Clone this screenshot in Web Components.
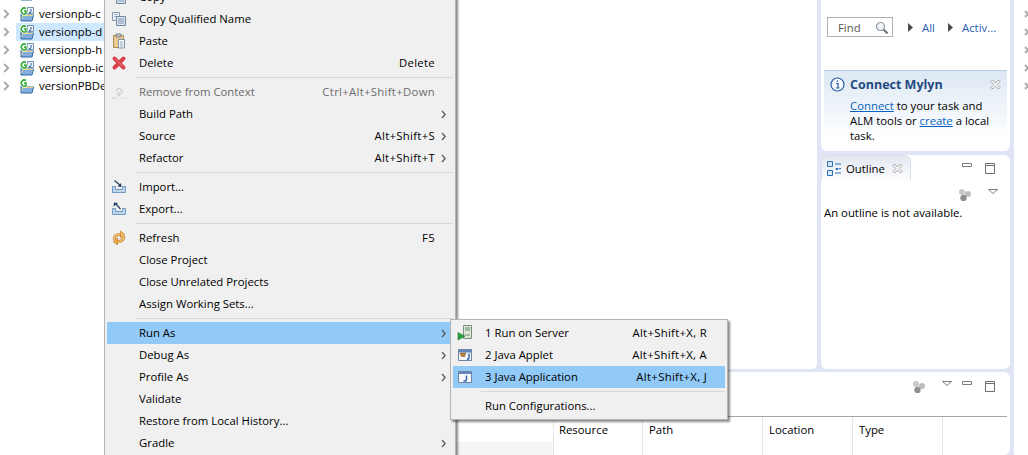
<!DOCTYPE html>
<html>
<head>
<meta charset="utf-8">
<title>Eclipse context menu</title>
<style>
  html, body { margin: 0; height: 100%; background: #fff; overflow: hidden; }
  body { font: 11.35px "Open Sans", "Liberation Sans", sans-serif; color: #000; }
</style>
</head>
<body>
<ide-shell>
  <project-tree slot="tree">
    <tree-row label="versionpb" style="margin-bottom:3px"></tree-row>
    <tree-row label="versionpb-c"></tree-row>
    <tree-row label="versionpb-d" selected></tree-row>
    <tree-row label="versionpb-h"></tree-row>
    <tree-row label="versionpb-ic"></tree-row>
    <tree-row label="versionPBDe" plain></tree-row>
  </project-tree>
  <task-panel slot="tasks"></task-panel>
  <outline-panel slot="outline"></outline-panel>
  <problems-panel slot="bottom"></problems-panel>
</ide-shell>

<ctx-menu style="left:104px;top:-17px;width:352px">
  <menu-item icon="copyq">Copy</menu-item>
  <menu-item icon="copyq">Copy Qualified Name</menu-item>
  <menu-item icon="paste">Paste</menu-item>
  <menu-item icon="del" keys="Delete">Delete</menu-item>
  <menu-sep></menu-sep>
  <menu-item icon="remove" keys="Ctrl+Alt+Shift+Down" disabled>Remove from Context</menu-item>
  <menu-item more>Build Path</menu-item>
  <menu-item keys="Alt+Shift+S" more>Source</menu-item>
  <menu-item keys="Alt+Shift+T" more>Refactor</menu-item>
  <menu-sep></menu-sep>
  <menu-item icon="import">Import...</menu-item>
  <menu-item icon="export">Export...</menu-item>
  <menu-sep></menu-sep>
  <menu-item icon="refresh" keys="F5">Refresh</menu-item>
  <menu-item>Close Project</menu-item>
  <menu-item>Close Unrelated Projects</menu-item>
  <menu-item>Assign Working Sets...</menu-item>
  <menu-sep></menu-sep>
  <menu-item more active>Run As</menu-item>
  <menu-item more>Debug As</menu-item>
  <menu-item more>Profile As</menu-item>
  <menu-item>Validate</menu-item>
  <menu-item>Restore from Local History...</menu-item>
  <menu-item more>Gradle</menu-item>
</ctx-menu>

<ctx-menu style="left:450px;top:319px;width:278px">
  <menu-item icon="server" keys="Alt+Shift+X, R">1 Run on Server</menu-item>
  <menu-item icon="applet" keys="Alt+Shift+X, A">2 Java Applet</menu-item>
  <menu-item icon="japp" keys="Alt+Shift+X, J" active>3 Java Application</menu-item>
  <menu-sep></menu-sep>
  <menu-item>Run Configurations...</menu-item>
</ctx-menu>

<script>
'use strict';

const ARROWS = 'M3 9.500C3 6 6 4 10 4.500M13 6.500C13 10 10 12 6 11.500';

const ICONS = {
  copyq: '<path d="M1.500 1.500h7v8h-7z" fill="#eef2f7" stroke="#8598ad"/><path d="M3 3.500h4M3 5.500h3" stroke="#9fb2c6"/><path d="M5.500 5.500h9v9h-9z" fill="#dbe5f0" stroke="#71889f"/><path d="M7 8h6M7 10h6M7 12h6" stroke="#7f9ab5"/>',
  paste: '<path d="M2.500 2.500h10v12h-10z" fill="#ecca92" stroke="#b28c55"/><path d="M5 1h5v3H5z" fill="#b8bcc2" stroke="#85888d"/><path d="M7.500 6.500h6v8.500h-6z" fill="#fbfcfe" stroke="#7f93a8"/><path d="M9 9h3M9 11h3M9 13h3" stroke="#92a6ba"/>',
  del: '<path d="M3.500 3.500l9 9M12.500 3.500l-9 9" stroke="#d8434c" stroke-width="4" stroke-linecap="round"/><path d="M4 3.500l8.500 8.500" stroke="#ef7f84" stroke-width="1"/>',
  remove: '<path d="M5 7.500a3 3 0 1 1 3 3M8 8l-1.500 2.500L9 12" fill="none" stroke="#c6c6c6"/><path d="M1 14h4M7 14h1M10 14h1M13 14h2" stroke="#cfcfcf"/>',
  import: '<path d="M1.500 7.500l3 0v3h7v-3h3v6h-13z" fill="#c0d5ea" stroke="#7199c4"/><path d="M3.500 1.500l6 5" stroke="#26405f" stroke-width="1.200"/><path d="M6.500 7.500l4 .5-.5-4z" fill="#26405f"/>',
  export: '<path d="M1.500 7.500l3 0v3h7v-3h3v6h-13z" fill="#c0d5ea" stroke="#7199c4"/><path d="M9.500 8l-5-5.500" stroke="#26405f" stroke-width="1.200"/><path d="M2.500 5.500l.5-4 4 .5z" fill="#26405f"/>',
  refresh: `<path d="${ARROWS}" fill="none" stroke="#c48636" stroke-width="3"/><path d="${ARROWS}" fill="none" stroke="#f4bd63" stroke-width="1.600"/><path d="M9.500 1 14 4.500 9.500 8z" fill="#f4bd63" stroke="#c48636" stroke-width=".8"/><path d="M6.500 8 2 11.500 6.500 15z" fill="#eeac48" stroke="#c48636" stroke-width=".8"/>`,
  server: '<path d="M6.500 .5h8v13h-8z" fill="#dfe7d6" stroke="#7d8c80"/><path d="M8 3h5M8 5h5" stroke="#5c8f6d"/><path d="M8 9h5v2H8z" fill="#a9b8aa"/><path d="M1 7.500v7.500L8 11.200z" fill="#2fa044" stroke="#1d7a31" stroke-width=".6"/>',
  applet: '<path d="M1.500 2.500h13v11h-13z" fill="#f3f6fa" stroke="#6f84a0"/><path d="M2 3h12v2.500H2z" fill="#5e88bd"/><path d="M3 6l1.500 3.500h3L9 6z" fill="#b9823c" stroke="#8c5f28" stroke-width=".6"/><path d="M12 6.500v4.200q0 1.500-1.500 1.500H10" fill="none" stroke="#2d5fa8" stroke-width="1.400"/>',
  japp: '<path d="M1.500 2.500h13v11h-13z" fill="#f6f8fb" stroke="#6f84a0"/><path d="M2 3h12v2H2z" fill="#5e88bd"/><path d="M9.500 6.500v4q0 1.500-1.500 1.500H6.500" fill="none" stroke="#2d5fa8" stroke-width="1.400"/>',
  info: '<circle cx="7.500" cy="7.500" r="6.500" fill="#f4f8fd" stroke="#2d5da6" stroke-width="1.200"/><path d="M7.500 3.500v1.500M6 6.500h2v4.500M6 11h3.500" fill="none" stroke="#2d5da6" stroke-width="1.200"/>',
  close: '<path d="M1 2.500 2.500 1 5.500 4 8.500 1 10 2.500 7 5.500 10 8.500 8.500 10 5.500 7 2.500 10 1 8.500 4 5.500z" fill="#fff" stroke="#8b8b8b" stroke-width=".8"/>',
  outline: '<path d="M.5 .5h5v5h-5z" fill="#d7e6f6" stroke="#2f6fb5"/><path d="M.5 9.500h5v5h-5z" fill="#d7e6f6" stroke="#2f6fb5"/><path d="M8 3h6M9 7.500h2v1H9zM12 7.500h2M8 12h6" stroke="#2f6fb5" fill="none"/>',
  find: '<circle cx="5.500" cy="5.500" r="4" fill="#f3f6f9" stroke="#8f9aa5" stroke-width="1.200"/><path d="M8.500 8.500l4 4" stroke="#6d6d6d" stroke-width="2"/>',
  group: '<circle cx="4" cy="4" r="3" fill="#c8c8c8"/><circle cx="10" cy="6" r="3" fill="#bdbdbd"/><circle cx="5.500" cy="10" r="3.200" fill="#8f8f8f"/>',
  tri: '<path d="M.5 .5h9L5 4.500z" fill="#fff" stroke="#7c7c7c"/>',
  min: '<path d="M.5 .5h9v3h-9z" fill="#fff" stroke="#7c7c7c"/>',
  max: '<path d="M.5 .5h9v10h-9z" fill="#fff" stroke="#6e6e6e"/><path d="M.5 2.500h9" stroke="#6e6e6e"/>',
  play: '<path d="M0 0l5 4.500L0 9z" fill="#4b4b4b"/>',
  chev: '<path d="M1 1l3.200 3.500L1 8" fill="none" stroke="#555" stroke-width="1.200"/>',
  treechev: '<path d="M1.200 1l4 4-4 4" fill="none" stroke="#a6a6a6" stroke-width="1.800"/>',
  edge: '<path d="M1 1l6 6M7 1L1 7" stroke="#a8a8a8" stroke-width="1.800"/>',
  project: '<path d="M2 7.500h4l1.500 1.500h7l-1.500 6H2z" fill="#83aede" stroke="#2e68a9"/><path d="M2.500 13l1.500-3.500h10" fill="none" stroke="#e8d27a"/><path d="M8.500 1.500h6v6h-6z" fill="#eef3f9" stroke="#6f8fb0"/><path d="M12 3v2.500q0 1-1 1h-1" fill="none" stroke="#2d5fa8"/><path d="M7 2.500A3 3 0 1 0 7 7.500V5H5" fill="none" stroke="#fff" stroke-width="3"/><path d="M7 2.500A3 3 0 1 0 7 7.500V5H5" fill="none" stroke="#2cab2f" stroke-width="1.500"/>',
  plainproject: '<path d="M2 7.500h5l1.500 1.500h6l-1.500 6H2z" fill="#83aede" stroke="#2e68a9"/><path d="M2.500 13l1.500-3.500h10" fill="none" stroke="#e8d27a"/><path d="M7 2.500A3 3 0 1 0 7 7.500V5H5" fill="none" stroke="#fff" stroke-width="3"/><path d="M7 2.500A3 3 0 1 0 7 7.500V5H5" fill="none" stroke="#2cab2f" stroke-width="1.500"/>'
};

const VIEWBOX = {
  close: [11, 11], tri: [10, 5], min: [10, 4], max: [10, 11], play: [5, 9], chev: [5, 9],
  treechev: [7, 10], edge: [8, 8], find: [13, 13], group: [13, 13], info: [15, 15], outline: [15, 15]
};

customElements.define('ide-icon', class extends HTMLElement {
  connectedCallback() {
    if (this.shadowRoot) return;
    const name = this.getAttribute('name');
    const [w, h] = VIEWBOX[name] || [16, 16];
    this.attachShadow({mode: 'open'}).innerHTML = `
      <style>:host { display: block; flex: none; width: ${w}px; height: ${h}px; } svg { display: block; }</style>
      <svg width="${w}" height="${h}" viewBox="0 0 ${w} ${h}">${ICONS[name]}</svg>`;
  }
});

const shellTemplate = document.createElement('template');
shellTemplate.innerHTML = `
  <style>
    :host { display: flex; width: 1028px; height: 455px; overflow: hidden; background: #fff; }
    .tree { flex: none; width: 200px; background: #fff; overflow: hidden; }
    .work {
      flex: none; width: 814px; display: grid; background: #dfe5f5;
      grid-template-columns: 617px 189px; grid-template-rows: 369px 1fr;
      column-gap: 4px; row-gap: 3px; padding-right: 4px; box-sizing: border-box;
    }
    .editor { background: #fff; border-bottom-right-radius: 5px; }
    .side { display: flex; flex-direction: column; gap: 4px; min-height: 0; }
    .bottom { grid-column: 1 / 3; min-height: 0; }
    .marks { flex: none; width: 14px; overflow: hidden; display: flex; flex-direction: column; padding-top: 10px; gap: 10px; }
    .marks ide-icon { margin-left: 10px; }
  </style>
  <div class="tree"><slot name="tree"></slot></div>
  <div class="work">
    <div class="editor"></div>
    <div class="side"><slot name="tasks"></slot><slot name="outline"></slot></div>
    <div class="bottom"><slot name="bottom"></slot></div>
  </div>
  <div class="marks">
    <ide-icon name="edge"></ide-icon><ide-icon name="edge"></ide-icon><ide-icon name="edge"></ide-icon>
    <ide-icon name="edge"></ide-icon><ide-icon name="edge"></ide-icon>
  </div>`;

customElements.define('ide-shell', class extends HTMLElement {
  constructor() {
    super();
    this.attachShadow({mode: 'open'}).appendChild(shellTemplate.content.cloneNode(true));
  }
});

customElements.define('project-tree', class extends HTMLElement {
  constructor() {
    super();
    this.attachShadow({mode: 'open'}).innerHTML = `
      <style>:host { display: flex; flex-direction: column; margin-top: -16px; }</style>
      <slot></slot>`;
  }
});

customElements.define('tree-row', class extends HTMLElement {
  connectedCallback() {
    if (this.shadowRoot) return;
    const icon = this.hasAttribute('plain') ? 'plainproject' : 'project';
    this.attachShadow({mode: 'open'}).innerHTML = `
      <style>
        :host { display: flex; align-items: center; height: 18px; white-space: nowrap; flex: none; }
        .chev { width: 16px; padding-left: 3px; box-sizing: border-box; }
        .row { display: flex; align-items: center; height: 18px; flex: 1; padding-left: 3px; gap: 4px; }
        .row span { padding-bottom: 2px; }
        :host([selected]) .row { background: #cde8ff; }
      </style>
      <div class="chev"><ide-icon name="treechev"></ide-icon></div>
      <div class="row"><ide-icon name="${icon}"></ide-icon><span>${this.getAttribute('label')}</span></div>`;
  }
});

customElements.define('ctx-menu', class extends HTMLElement {
  constructor() {
    super();
    this.attachShadow({mode: 'open'}).innerHTML = `
      <style>
        :host {
          display: flex; flex-direction: column; position: absolute; box-sizing: border-box;
          background: #f0f0f0; border: 1px solid #b4b4b4; padding: 2px;
          box-shadow: 2px 2px 2px rgba(0,0,0,.45);
        }
      </style>
      <slot></slot>`;
  }
});

customElements.define('menu-sep', class extends HTMLElement {
  constructor() {
    super();
    this.attachShadow({mode: 'open'}).innerHTML = `
      <style>
        :host { display: block; height: 7px; margin-left: 28px; box-sizing: border-box; padding-top: 3px; }
        div { height: 1px; background: #d7d7d7; }
      </style>
      <div></div>`;
  }
});

customElements.define('menu-item', class extends HTMLElement {
  connectedCallback() {
    if (this.shadowRoot) return;
    const icon = this.getAttribute('icon');
    const keys = this.getAttribute('keys');
    this.attachShadow({mode: 'open'}).innerHTML = `
      <style>
        :host { display: flex; align-items: center; height: 22px; white-space: nowrap; flex: none; }
        :host([active]) { background: #91c9f7; }
        :host([disabled]) { color: #6d6d6d; }
        .icon { flex: none; width: 32px; padding-left: 4px; box-sizing: border-box; }
        .label { flex: 1; padding-bottom: 2px; }
        .keys { padding-bottom: 2px; letter-spacing: .3px; }
        .more { flex: none; width: 18px; padding-left: 6px; box-sizing: border-box; }
      </style>
      <div class="icon">${icon ? `<ide-icon name="${icon}"></ide-icon>` : ''}</div>
      <div class="label"><slot></slot></div>
      ${keys ? `<div class="keys">${keys}</div>` : ''}
      <div class="more">${this.hasAttribute('more') ? '<ide-icon name="chev"></ide-icon>' : ''}</div>`;
  }
});

customElements.define('view-panel', class extends HTMLElement {
  constructor() {
    super();
    this.attachShadow({mode: 'open'}).innerHTML = `
      <style>
        :host { display: flex; flex-direction: column; background: #fff; border-radius: 6px; height: 100%; box-sizing: border-box; overflow: hidden; }
      </style>
      <slot></slot>`;
  }
});

customElements.define('task-panel', class extends HTMLElement {
  constructor() {
    super();
    this.attachShadow({mode: 'open'}).innerHTML = `
      <style>
        :host { display: block; flex: none; height: 151px; }
        view-panel { border-radius: 0 0 6px 6px; padding: 17px 3px 0; }
        .find { display: flex; align-items: center; height: 20px; padding-left: 3px; flex: none; }
        .box {
          width: 66px; height: 20px; box-sizing: border-box; border: 1px solid #b0b0b0; color: #555;
          display: flex; align-items: center; justify-content: space-between; padding: 0 4px 0 10px; margin-right: 15px;
        }
        .find a { color: #2a5db0; margin: 0 0 0 9px; width: 16px; }
        .find a + ide-icon { margin-left: 10px; }
        .find a.act { width: auto; margin-left: 9px; }
        .mylyn {
          flex: 1; margin-top: 33px; border-top: 1px solid #b5c9e2; padding: 3px 6px 0;
          background: linear-gradient(#dde8f4, #fff 85%); display: grid; align-content: start;
          grid-template-columns: 20px 1fr 11px; grid-template-rows: 20px auto; align-items: center;
        }
        b { font-size: 12.5px; color: #1f4a80; }
        p { grid-column: 2 / 4; margin: 4px 0 0; line-height: 15px; }
        p a { color: #0563c1; text-decoration: underline; }
      </style>
      <view-panel>
        <div class="find">
          <div class="box"><span>Find</span><ide-icon name="find"></ide-icon></div>
          <ide-icon name="play"></ide-icon><a>All</a>
          <ide-icon name="play"></ide-icon><a class="act">Activ...</a>
        </div>
        <div class="mylyn">
          <ide-icon name="info"></ide-icon><b>Connect Mylyn</b><ide-icon name="close"></ide-icon>
          <p><a>Connect</a> to your task and ALM tools or <a>create</a> a local task.</p>
        </div>
      </view-panel>`;
  }
});

customElements.define('outline-panel', class extends HTMLElement {
  constructor() {
    super();
    this.attachShadow({mode: 'open'}).innerHTML = `
      <style>
        :host { display: block; flex: 1; min-height: 0; }
        .head { display: flex; align-items: flex-start; height: 25px; flex: none; }
        .tab {
          width: 90px; height: 25px; box-sizing: border-box; display: flex; align-items: center;
          padding-left: 5px; gap: 4px; border-radius: 7px 7px 0 0;
          background: linear-gradient(#e3e7f0, #f2f4f9 60%, #fff); border: 1px solid #d9dde6; border-bottom: 0;
        }
        .tab span { flex: 1; }
        .tab ide-icon[name=close] { margin-right: 7px; }
        .tools { margin-left: auto; display: flex; gap: 13px; padding: 8px 15px 0 0; }
        .tools2 { display: flex; justify-content: flex-end; align-items: flex-start; gap: 17px; padding: 8px 12px 0 0; height: 17px; flex: none; }
        .tools2 ide-icon[name=tri] { margin-top: 1px; }
        p { margin: 0; padding: 0 3px; line-height: 16px; }
      </style>
      <view-panel>
        <div class="head">
          <div class="tab"><ide-icon name="outline"></ide-icon><span>Outline</span><ide-icon name="close"></ide-icon></div>
          <div class="tools"><ide-icon name="min"></ide-icon><ide-icon name="max"></ide-icon></div>
        </div>
        <div class="tools2"><ide-icon name="group"></ide-icon><ide-icon name="tri"></ide-icon></div>
        <p>An outline is not available.</p>
      </view-panel>`;
  }
});

customElements.define('problems-panel', class extends HTMLElement {
  constructor() {
    super();
    this.attachShadow({mode: 'open'}).innerHTML = `
      <style>
        :host { display: block; height: 100%; }
        .tools {
          display: flex; justify-content: flex-end; align-items: flex-start; box-sizing: border-box;
          height: 45px; padding: 8px 12px 0 0; border-bottom: 1px solid #a6a6a6; margin-right: 3px; flex: none;
        }
        .tools ide-icon[name=group] { margin-right: 17px; }
        .tools ide-icon[name=tri] { margin: 1px 10px 0 0; }
        .tools ide-icon[name=min] { margin: 1px 13px 0 0; }
        .tools ide-icon[name=max] { margin-top: 1px; }
        .cols { flex: 1; display: grid; grid-template-columns: 353px 89px 120px 90px 90px 1fr; margin-right: 3px; }
        .cols div { border-left: 1px solid #e6e6e6; padding: 5px 0 0 6px; line-height: 16px; }
        .cols .first { border-left: 0; background: linear-gradient(#fff 25px, #f5f5f5 25px); }
        .cols .res { padding-left: 5px; }
      </style>
      <view-panel>
        <div class="tools">
          <ide-icon name="group"></ide-icon><ide-icon name="tri"></ide-icon>
          <ide-icon name="min"></ide-icon><ide-icon name="max"></ide-icon>
        </div>
        <div class="cols">
          <div class="first"></div><div class="res">Resource</div><div>Path</div><div>Location</div><div>Type</div><div></div>
        </div>
      </view-panel>`;
  }
});
</script>
</body>
</html>
